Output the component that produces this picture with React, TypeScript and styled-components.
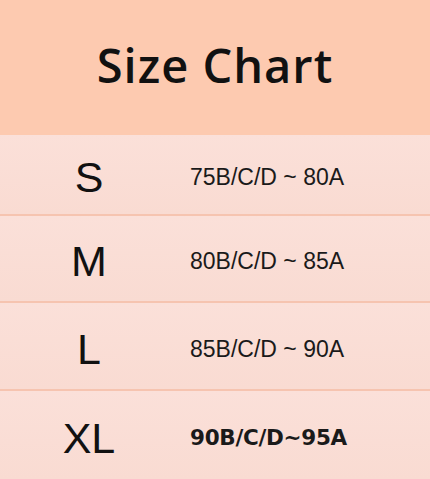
import styled, { createGlobalStyle } from 'styled-components';

const GlobalStyle = createGlobalStyle`
  html, body {
    margin: 0;
    padding: 0;
    background: #fadcd4;
  }
`;

const Chart = styled.div`
  width: 430px;
  height: 479px;
  display: flex;
  flex-direction: column;
  background: #fadcd4;
  overflow: hidden;
`;

const Header = styled.div`
  height: 135px;
  flex-shrink: 0;
  display: flex;
  align-items: center;
  justify-content: center;
  padding-bottom: 6px;
  box-sizing: border-box;
  background: #fdcab0;
`;

const Title = styled.h1`
  margin: 0;
  font-family: "Open Sans", sans-serif;
  font-weight: 600;
  font-size: 47px;
  letter-spacing: 1px;
  color: #111;
`;

const Row = styled.div<{ h: number; last?: boolean }>`
  height: ${(p) => p.h}px;
  flex-shrink: 0;
  box-sizing: border-box;
  display: grid;
  grid-template-columns: 178px 1fr;
  align-items: center;
  padding-top: 6px;
  background: linear-gradient(#fbe0d9, #f9dbd2);
  border-bottom: ${(p) => (p.last ? 'none' : '2px solid #f6c4b0')};
`;

const SizeCell = styled.div`
  text-align: center;
  font-family: "Liberation Sans", Arial, sans-serif;
  font-size: 43px;
  line-height: 1;
  color: #111;
`;

const ValueCell = styled.div<{ bold?: boolean }>`
  padding-left: 12px;
  font-family: ${(p) => (p.bold ? '"DejaVu Sans", sans-serif' : '"Liberation Sans", Arial, sans-serif')};
  font-weight: ${(p) => (p.bold ? 700 : 400)};
  font-size: ${(p) => (p.bold ? 21.5 : 23)}px;
  letter-spacing: ${(p) => (p.bold ? -0.3 : 0)}px;
  line-height: 1;
  color: #1a1a1a;
`;

const rows = [
  { size: 'S', value: '75B/C/D ~ 80A', h: 81 },
  { size: 'M', value: '80B/C/D ~ 85A', h: 87 },
  { size: 'L', value: '85B/C/D ~ 90A', h: 88 },
  { size: 'XL', value: '90B/C/D~95A', h: 88, bold: true },
];

export default function App() {
  return (
    <>
      <GlobalStyle />
      <Chart>
        <Header>
          <Title>Size Chart</Title>
        </Header>
        {rows.map((r, i) => (
          <Row key={r.size} h={r.h} last={i === rows.length - 1}>
            <SizeCell>{r.size}</SizeCell>
            <ValueCell bold={r.bold}>{r.value}</ValueCell>
          </Row>
        ))}
      </Chart>
    </>
  );
}
